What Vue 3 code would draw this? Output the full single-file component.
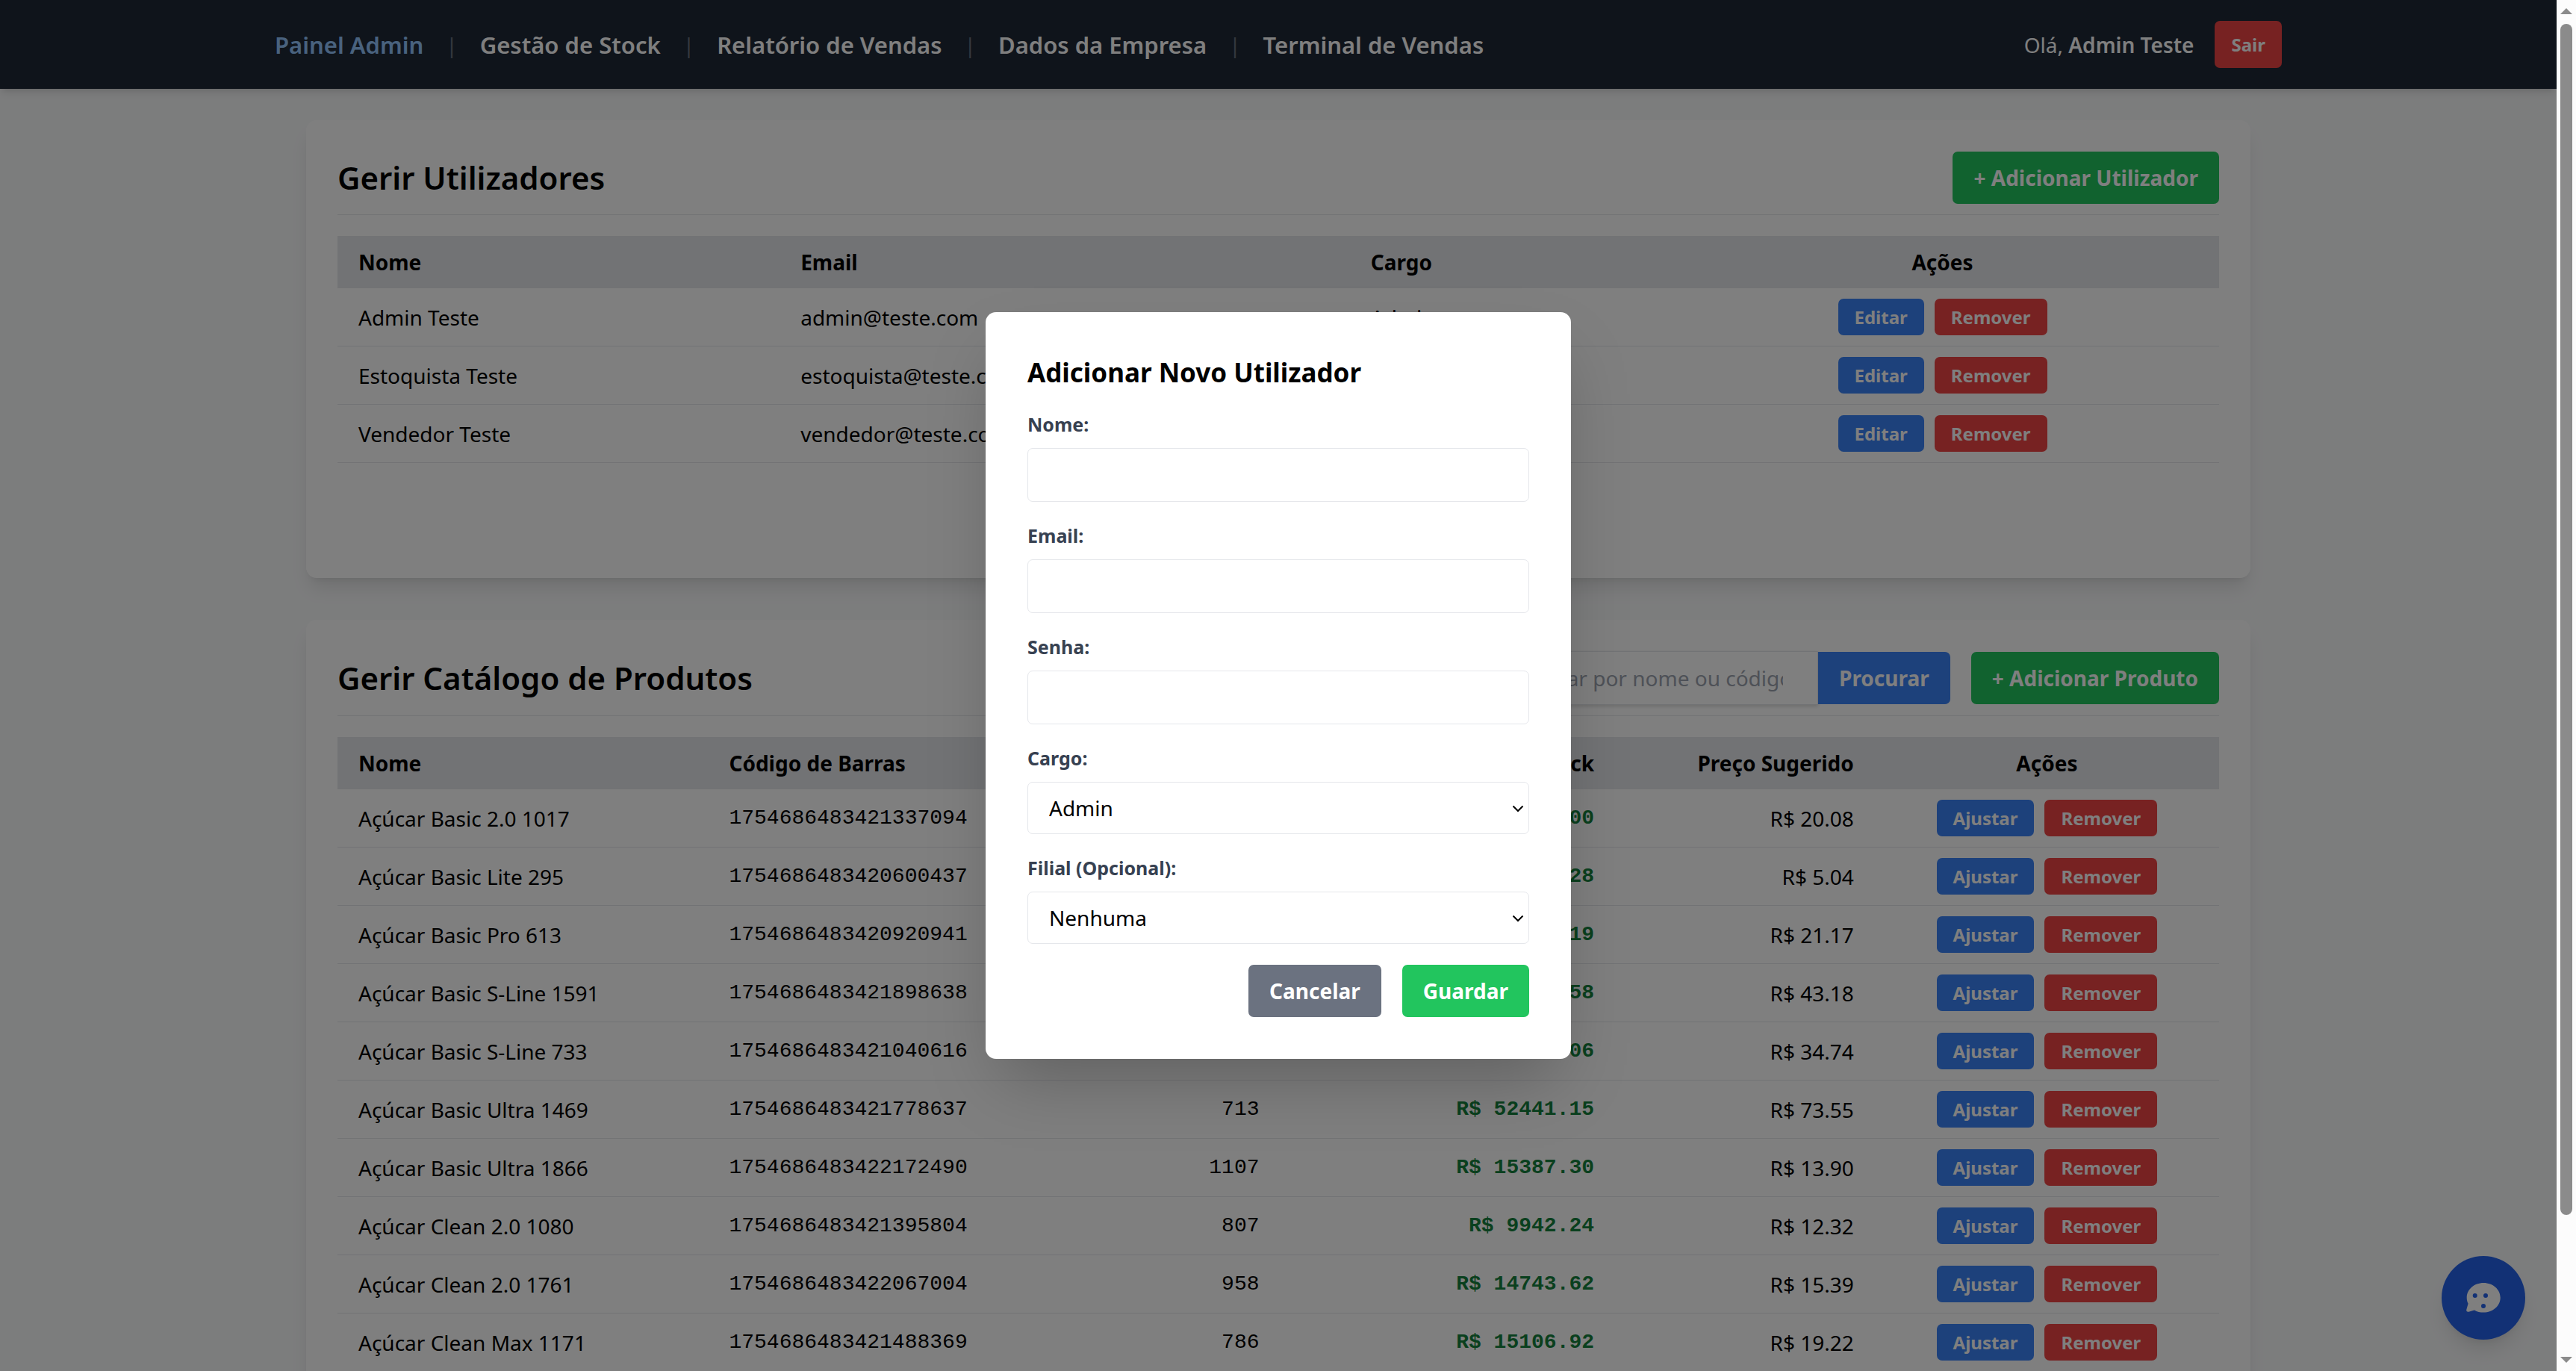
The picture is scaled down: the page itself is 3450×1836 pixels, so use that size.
<script setup>
import { ref } from 'vue'

const links = [
  'Painel Admin',
  'Gestão de Stock',
  'Relatório de Vendas',
  'Dados da Empresa',
  'Terminal de Vendas'
]

const users = [
  { name: 'Admin Teste', email: 'admin@teste.com', role: 'Admin' },
  { name: 'Estoquista Teste', email: 'estoquista@teste.com', role: 'Estoquista' },
  { name: 'Vendedor Teste', email: 'vendedor@teste.com', role: 'Vendedor' }
]

const products = [
  { name: 'Açúcar Basic 2.0 1017', code: '1754686483421337094', stock: 850, total: '17068.00', price: '20.08' },
  { name: 'Açúcar Basic Lite 295', code: '1754686483420600437', stock: 782, total: '3941.28', price: '5.04' },
  { name: 'Açúcar Basic Pro 613', code: '1754686483420920941', stock: 907, total: '19201.19', price: '21.17' },
  { name: 'Açúcar Basic S-Line 1591', code: '1754686483421898638', stock: 631, total: '27246.58', price: '43.18' },
  { name: 'Açúcar Basic S-Line 733', code: '1754686483421040616', stock: 819, total: '28452.06', price: '34.74' },
  { name: 'Açúcar Basic Ultra 1469', code: '1754686483421778637', stock: 713, total: '52441.15', price: '73.55' },
  { name: 'Açúcar Basic Ultra 1866', code: '1754686483422172490', stock: 1107, total: '15387.30', price: '13.90' },
  { name: 'Açúcar Clean 2.0 1080', code: '1754686483421395804', stock: 807, total: '9942.24', price: '12.32' },
  { name: 'Açúcar Clean 2.0 1761', code: '1754686483422067004', stock: 958, total: '14743.62', price: '15.39' },
  { name: 'Açúcar Clean Max 1171', code: '1754686483421488369', stock: 786, total: '15106.92', price: '19.22' }
]

const form = ref({ name: '', email: '', password: '', role: 'Admin', branch: 'Nenhuma' })
</script>

<template>
  <div class="window">
    <div class="page">
      <header class="topbar">
        <div class="topbar-inner">
          <nav class="nav">
            <template v-for="(link, i) in links" :key="link">
              <span v-if="i" class="sep">|</span>
              <a href="#" class="nav-link" :class="{ active: i === 0 }">{{ link }}</a>
            </template>
          </nav>
          <div class="account">
            <span class="hello">Olá, <strong>Admin Teste</strong></span>
            <button type="button" class="btn-small logout red">Sair</button>
          </div>
        </div>
      </header>

      <main class="content">
        <section class="card">
          <div class="card-head">
            <h2>Gerir Utilizadores</h2>
            <button type="button" class="btn green">+ Adicionar Utilizador</button>
          </div>
          <div class="users-area">
            <table>
              <colgroup>
                <col class="u-name"><col class="u-email"><col class="u-role"><col class="u-actions">
              </colgroup>
              <thead>
                <tr><th>Nome</th><th>Email</th><th>Cargo</th><th class="center">Ações</th></tr>
              </thead>
              <tbody>
                <tr v-for="u in users" :key="u.email">
                  <td>{{ u.name }}</td>
                  <td>{{ u.email }}</td>
                  <td>{{ u.role }}</td>
                  <td>
                    <div class="actions">
                      <button type="button" class="btn-small blue">Editar</button>
                      <button type="button" class="btn-small red">Remover</button>
                    </div>
                  </td>
                </tr>
              </tbody>
            </table>
          </div>
        </section>

        <section class="card">
          <div class="card-head">
            <h2>Gerir Catálogo de Produtos</h2>
            <div class="tools">
              <form class="search" @submit.prevent>
                <input type="text" aria-label="Procurar produtos" placeholder="Procurar por nome ou código...">
                <button type="submit" class="btn blue">Procurar</button>
              </form>
              <button type="button" class="btn green">+ Adicionar Produto</button>
            </div>
          </div>
          <table>
            <colgroup>
              <col class="p-name"><col class="p-code"><col class="p-stock"><col class="p-total"><col class="p-price"><col class="p-actions">
            </colgroup>
            <thead>
              <tr>
                <th>Nome</th>
                <th>Código de Barras</th>
                <th class="right">Stock Total</th>
                <th class="right">Valor em Stock</th>
                <th class="right">Preço Sugerido</th>
                <th class="center">Ações</th>
              </tr>
            </thead>
            <tbody>
              <tr v-for="p in products" :key="p.code">
                <td>{{ p.name }}</td>
                <td class="mono">{{ p.code }}</td>
                <td class="mono right">{{ p.stock }}</td>
                <td class="mono right total">R$ {{ p.total }}</td>
                <td class="right">R$ {{ p.price }}</td>
                <td>
                  <div class="actions">
                    <button type="button" class="btn-small blue">Ajustar</button>
                    <button type="button" class="btn-small red">Remover</button>
                  </div>
                </td>
              </tr>
            </tbody>
          </table>
        </section>
      </main>
    </div>

    <button type="button" class="fab" aria-label="Abrir chat">
      <svg viewBox="0 0 56 56" aria-hidden="true">
        <path
          fill="#fff"
          fill-rule="evenodd"
          d="M28.2 8C15.7 8 5.7 16.8 5.7 27.7c0 2.900.6 5.600 1.900 8L5.300 43.800c-.6 2.100 1.100 3.400 3 2.900l7.600-2.300c3.600 2.100 7.800 3.200 12.300 3.200 12.400 0 22.500-8.900 22.500-19.900S40.600 8 28.200 8ZM16.700 22a3 3 0 1 1 0 6 3 3 0 0 1 0-6Zm14.300 0a3 3 0 1 1 0 6 3 3 0 0 1 0-6Zm-3 14a3 3 0 1 1 0 6 3 3 0 0 1 0-6Z"
        />
      </svg>
    </button>

    <div class="overlay">
      <form class="modal" role="dialog" aria-labelledby="modal-title" @submit.prevent>
        <h3 id="modal-title">Adicionar Novo Utilizador</h3>
        <div class="field">
          <label for="f-name">Nome:</label>
          <input id="f-name" v-model="form.name" type="text">
        </div>
        <div class="field">
          <label for="f-email">Email:</label>
          <input id="f-email" v-model="form.email" type="email">
        </div>
        <div class="field">
          <label for="f-pass">Senha:</label>
          <input id="f-pass" v-model="form.password" type="password">
        </div>
        <div class="field">
          <label for="f-role">Cargo:</label>
          <div class="select">
            <select id="f-role" v-model="form.role">
              <option>Admin</option>
              <option>Estoquista</option>
              <option>Vendedor</option>
            </select>
            <svg viewBox="0 0 16 10" aria-hidden="true"><path d="M1.500 1.500 8 8l6.500-6.500" /></svg>
          </div>
        </div>
        <div class="field">
          <label for="f-branch">Filial (Opcional):</label>
          <div class="select">
            <select id="f-branch" v-model="form.branch">
              <option>Nenhuma</option>
            </select>
            <svg viewBox="0 0 16 10" aria-hidden="true"><path d="M1.500 1.500 8 8l6.500-6.500" /></svg>
          </div>
        </div>
        <div class="modal-actions">
          <button type="button" class="btn gray">Cancelar</button>
          <button type="submit" class="btn green">Guardar</button>
        </div>
      </form>
    </div>

    <div class="scrollbar" aria-hidden="true">
      <svg class="arrow" viewBox="0 0 16 8"><path d="M8 0l8 8H0z" /></svg>
      <div class="track"><div class="thumb"></div></div>
      <svg class="arrow" viewBox="0 0 16 8"><path d="M0 0h16L8 8z" /></svg>
    </div>
  </div>
</template>

<style>
body {
  background: #f9fafb;
}
</style>

<style scoped>
* {
  box-sizing: border-box;
}

.window {
  position: relative;
  height: 100vh;
  padding-right: 26px;
  overflow: hidden;
  color: #000;
  font-family: "Noto Sans", sans-serif;
  font-size: 28px;
  line-height: 42px;
}

.page {
  height: 100%;
  overflow-y: auto;
  scrollbar-width: none;
}

button,
input,
select {
  margin: 0;
  font: inherit;
  color: inherit;
}

button {
  border: 0;
  cursor: pointer;
}

/* Top bar */
.topbar {
  position: relative;
  padding: 28px 0;
  background: #1f2937;
  color: #fff;
  box-shadow: 0 7px 11px -2px rgba(0, 0, 0, 0.1), 0 4px 7px -4px rgba(0, 0, 0, 0.1);
}

.topbar-inner,
.content {
  width: 100%;
  max-width: 2688px;
  margin: 0 auto;
}

.topbar-inner,
.nav,
.account {
  display: flex;
  align-items: center;
}

.topbar-inner {
  justify-content: space-between;
}

.nav {
  gap: 30px;
}

.nav-link {
  color: #fff;
  font-size: 31px;
  font-weight: 600;
  text-decoration: none;
}

.nav-link.active {
  color: #93c5fd;
}

.sep {
  color: #6b7280;
}

.account {
  gap: 28px;
}

.hello strong {
  font-weight: 600;
}

/* Buttons */
.btn {
  padding: 14px 28px;
  border-radius: 7px;
  color: #fff;
  font-weight: 700;
  white-space: nowrap;
}

.btn-small {
  padding: 7px 22px;
  border-radius: 7px;
  color: #fff;
  font-size: 24px;
  font-weight: 700;
  line-height: 35px;
}

.logout {
  padding: 14px 22px;
}

.green { background: #22c55e; }
.blue { background: #3b82f6; }
.red { background: #ef4444; }
.gray { background: #6b7280; }

/* Cards */
.content {
  display: flex;
  flex-direction: column;
  gap: 56px;
  padding: 42px;
}

.card {
  padding: 42px;
  border-radius: 14px;
  background: #fff;
  box-shadow: 0 18px 26px -5px rgba(0, 0, 0, 0.1), 0 7px 11px -7px rgba(0, 0, 0, 0.1);
}

.card-head {
  display: flex;
  align-items: center;
  justify-content: space-between;
  margin-bottom: 28px;
  padding-bottom: 14px;
  border-bottom: 1px solid #e5e7eb;
}

h2 {
  margin: 0;
  font-size: 42px;
  font-weight: 600;
  line-height: 56px;
}

.users-area {
  min-height: 416px;
}

.tools,
.search {
  display: flex;
  align-items: center;
}

.tools {
  gap: 28px;
}

.search input {
  width: 448px;
  height: 72px;
  padding: 14px 46px 14px 24px;
  border: 1px solid #e5e7eb;
  border-radius: 7px 0 0 7px;
  background: #fff;
  box-shadow: 0 2px 5px rgba(0, 0, 0, 0.15);
}

.search input::placeholder {
  color: #9ca3af;
  opacity: 1;
}

.search .btn {
  border-radius: 0 7px 7px 0;
}

/* Tables */
table {
  width: 100%;
  table-layout: fixed;
  border-collapse: collapse;
}

.u-name { width: 23.5%; }
.u-email { width: 30.3%; }
.u-role { width: 16.8%; }
.u-actions { width: 29.4%; }

.p-name { width: 19.7%; }
.p-code { width: 17.7%; }
.p-stock { width: 12.7%; }
.p-total { width: 17.8%; }
.p-price { width: 13.8%; }
.p-actions { width: 18.3%; }

th {
  padding: 14px 28px;
  background: #e5e7eb;
  font-weight: 700;
  text-align: left;
  white-space: nowrap;
}

td {
  padding: 14px 28px;
  white-space: nowrap;
}

tbody tr {
  border-bottom: 1px solid #e5e7eb;
}

.right { text-align: right; }
.center { text-align: center; }

.mono {
  font-family: "Liberation Mono", monospace;
}

.total {
  color: #15803d;
  font-weight: 700;
}

.actions {
  display: flex;
  justify-content: center;
  gap: 14px;
}

/* Floating chat button */
.fab {
  position: absolute;
  right: 68px;
  bottom: 42px;
  display: flex;
  align-items: center;
  justify-content: center;
  width: 112px;
  height: 112px;
  padding: 0;
  border-radius: 50%;
  background: #2563eb;
  box-shadow: 0 18px 26px -5px rgba(0, 0, 0, 0.1), 0 7px 11px -7px rgba(0, 0, 0, 0.1);
}

.fab svg {
  width: 56px;
  height: 56px;
}

/* Dialog */
.overlay {
  position: absolute;
  inset: 0 26px 0 0;
  display: flex;
  align-items: center;
  justify-content: center;
  background: rgba(0, 0, 0, 0.5);
}

.modal {
  display: flex;
  flex-direction: column;
  gap: 28px;
  width: 100%;
  max-width: 784px;
  padding: 56px;
  border-radius: 14px;
  background: #fff;
  box-shadow: 0 44px 88px -21px rgba(0, 0, 0, 0.25);
}

h3 {
  margin: 0;
  font-size: 35px;
  font-weight: 700;
  line-height: 49px;
}

.field {
  display: flex;
  flex-direction: column;
  gap: 14px;
}

.field label {
  color: #374151;
  font-size: 25px;
  font-weight: 700;
  line-height: 35px;
}

.field input,
.field select {
  width: 100%;
  height: 72px;
  padding: 0 28px;
  border: 1px solid #e5e7eb;
  border-radius: 7px;
  background: #fff;
  outline: none;
}

.field select {
  display: block;
  height: 70px;
  appearance: none;
}

.select {
  position: relative;
}

.select svg {
  position: absolute;
  top: 31px;
  right: 7px;
  width: 16px;
  height: 10px;
  fill: none;
  stroke: #000;
  stroke-width: 2;
  pointer-events: none;
}

.modal-actions {
  display: flex;
  justify-content: flex-end;
  gap: 28px;
}

/* Scroll bar */
.scrollbar {
  position: absolute;
  inset: 0 0 0 auto;
  display: flex;
  flex-direction: column;
  align-items: center;
  gap: 13px;
  width: 26px;
  padding: 11px 0;
  background: #fcfcfc;
}

.arrow {
  width: 16px;
  height: 8px;
  fill: #8b8b8b;
}

.track {
  flex: 1;
  width: 16px;
}

.thumb {
  height: 90%;
  border-radius: 8px;
  background: #8b8b8b;
}
</style>
